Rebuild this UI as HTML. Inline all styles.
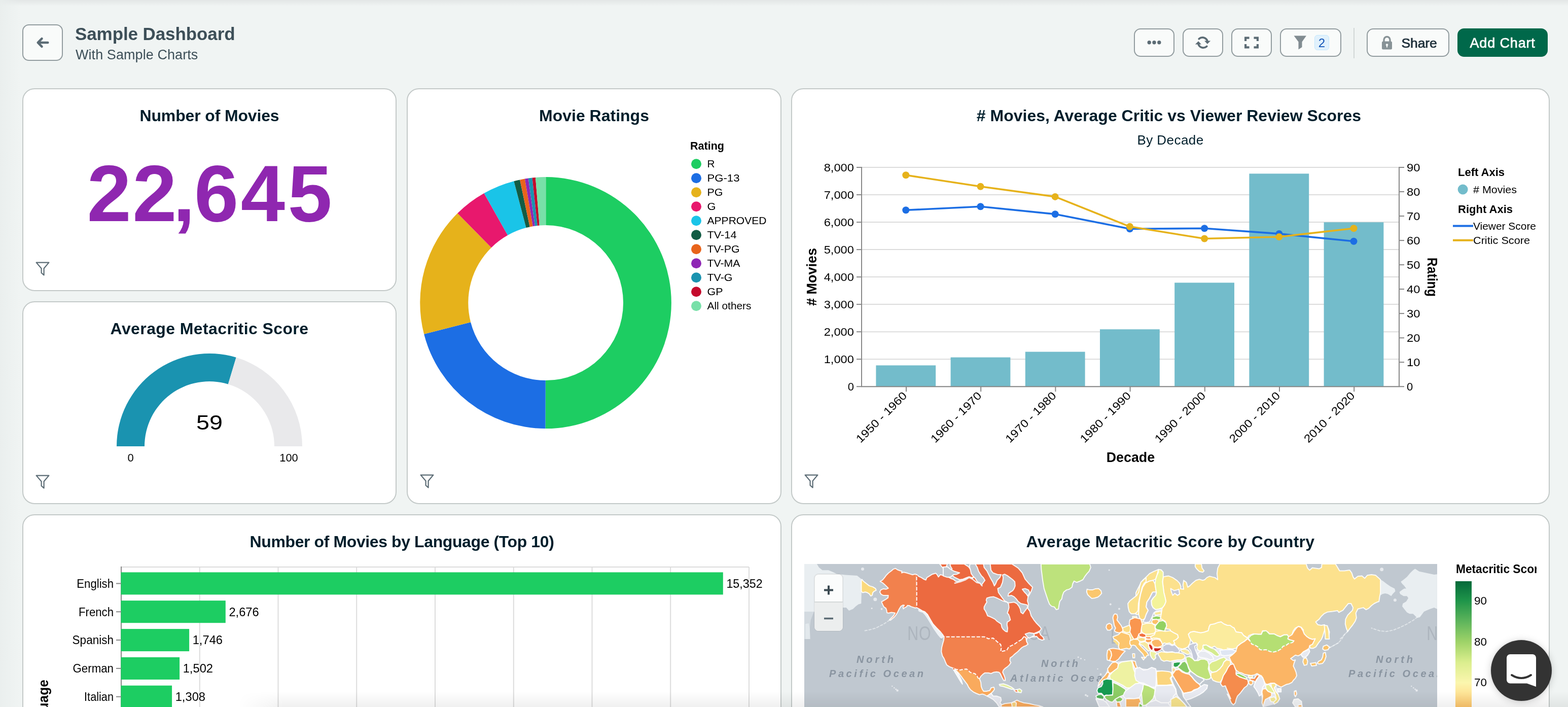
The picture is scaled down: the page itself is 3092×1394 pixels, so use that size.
<!DOCTYPE html>
<html lang="en">
<head>
<meta charset="utf-8">
<title>Sample Dashboard</title>
<style>
html,body{margin:0;padding:0}
body{width:3092px;height:1394px;overflow:hidden;background:#f0f4f3;font-family:"Liberation Sans",sans-serif;position:relative;color:#001e2b}
main,header{will-change:transform}
svg text{font-family:"Liberation Sans",sans-serif}
.shade-top{position:absolute;left:0;top:0;width:3092px;height:12px;background:linear-gradient(#e3e6e6,rgba(240,244,243,0))}
.shade-bottom{position:absolute;left:470px;top:1364px;width:2622px;height:30px;background:linear-gradient(rgba(0,0,0,0),rgba(0,0,0,.06));-webkit-mask-image:linear-gradient(90deg,transparent,#000 90px);mask-image:linear-gradient(90deg,transparent,#000 90px);pointer-events:none}
.shade-left{position:absolute;left:0;top:0;width:40px;height:1394px;background:linear-gradient(90deg,rgba(233,238,237,.85),rgba(240,244,243,0))}
.btn{position:absolute;box-sizing:border-box;top:56px;height:56px;border:2px solid #929c9f;border-radius:13px;background:#f9fbfa;box-shadow:0 0 0 0 transparent}
.btn svg{position:absolute}
.btn span{position:absolute;white-space:nowrap;line-height:1}
#back{left:44px;top:48px;width:80px;height:72px;border-radius:13px}
h1{position:absolute;margin:0;left:148px;top:47px;font-size:35px;line-height:40px;font-weight:700;color:#3d4f58;white-space:nowrap;letter-spacing:-0.1px}
.sub{position:absolute;margin:0;left:149px;top:92px;letter-spacing:0.07px;font-size:27px;line-height:32px;color:#3d4f58;white-space:nowrap}
.card{position:absolute;box-sizing:border-box;background:#fff;border:2px solid #c3c9c8;border-radius:24px;overflow:hidden}
.card h2{position:absolute;margin:0;left:0;right:0;text-align:center;font-size:32px;line-height:36px;font-weight:700;color:#001e2b;white-space:nowrap}
.card h2 span{display:inline-block}
.card .st{position:absolute;margin:0;left:0;right:0;text-align:center;font-size:26px;line-height:30px;color:#001e2b;white-space:nowrap}
.card > svg.ch{position:absolute;left:-2px;top:-2px}
.fi{position:absolute;left:24px}
.big{position:absolute;left:0;right:0;text-align:center;font-weight:700;color:#8f27b0;white-space:nowrap}
</style>
</head>
<body>
<div class="shade-top"></div><div class="shade-left"></div>
<header>
<a class="btn" id="back" aria-label="Back"><svg viewBox="0 0 32 32" width="32" height="32" style="left:22px;top:18px"><path d="M14.500 8.200L6.700 16l7.800 7.800M7.200 16H26.300" fill="none" stroke="#5c6c75" stroke-width="4.500" stroke-linecap="round" stroke-linejoin="round"/></svg></a>
<h1>Sample Dashboard</h1>
<p class="sub">With Sample Charts</p>
<nav>
<a class="btn" style="left:2236px;width:80px" aria-label="More"><svg viewBox="0 0 32 32" width="32" height="32" style="left:22px;top:10px"><circle cx="6.2" cy="15.8" r="3.7" fill="#5c6c75"/><circle cx="16" cy="15.8" r="3.7" fill="#5c6c75"/><circle cx="25.8" cy="15.8" r="3.7" fill="#5c6c75"/></svg></a>
<a class="btn" style="left:2332px;width:80px" aria-label="Refresh"><svg viewBox="0 0 32 32" width="32" height="32" style="left:22px;top:10px"><g fill="none" stroke="#5c6c75" stroke-width="3.8" stroke-linecap="round"><path d="M8.300 8.600A10.200 10.200 0 0 1 24.600 12"/><path d="M23.700 23.400A10.200 10.200 0 0 1 7.400 20"/></g><path d="M19 12.500H31.100L24.900 18.700Z" fill="#5c6c75"/><path d="M13 19.500H0.900L7.100 13.300Z" fill="#5c6c75"/></svg></a>
<a class="btn" style="left:2428px;width:80px" aria-label="Fullscreen"><svg viewBox="0 0 28 24" width="28" height="24" style="left:24px;top:14px"><path d="M2.100 9V2.600H9.500M18.500 2.600H25.900V9M25.900 15V21.400H18.500M9.500 21.400H2.100V15" fill="none" stroke="#5c6c75" stroke-width="4.200"/></svg></a>
<a class="btn" style="left:2524px;width:121px" aria-label="Filters"><svg viewBox="0 0 28 28" width="28" height="28" style="left:24px;top:12px"><path d="M1.500 0.500H26L17.500 12.500V23L10.500 27.500V12.500Z" fill="#818c91"/></svg><span style="left:66px;top:11px;width:29px;height:30px;box-sizing:border-box;border:1px solid #c3e7fe;border-radius:6px;background:#e1f1fc;color:#1254b7;font-size:24px;line-height:29px;text-align:center">2</span></a>
<i style="position:absolute;left:2669px;top:55px;width:2px;height:60px;background:#d2d7d6"></i>
<a class="btn" style="left:2695px;width:163px"><svg viewBox="0 0 22 28" width="22" height="29" style="left:27px;top:12px"><path d="M5 12V8a6 6 0 0 1 12 0v4" fill="none" stroke="#889397" stroke-width="3.4"/><rect x="1" y="11" width="20" height="16" rx="2.5" fill="#889397"/><circle cx="11" cy="18" r="2.2" fill="#f9fbfa"/><rect x="10" y="18" width="2" height="5" fill="#f9fbfa"/></svg><span style="left:66.5px;top:11px;font-size:26.5px;line-height:32px;font-weight:400;color:#1c2d38;-webkit-text-stroke:0.7px #1c2d38;letter-spacing:-0.1px">Share</span></a>
<a class="btn" style="left:2874px;width:178px;background:#00684a;border-color:#00684a"><span style="left:22.5px;top:11px;font-size:27px;line-height:32px;font-weight:400;color:#fff;-webkit-text-stroke:0.7px #fff;letter-spacing:0.85px">Add Chart</span></a>
</nav>
</header>
<main>
<section class="card" style="left:44px;top:174px;width:738px;height:400px"><h2 style="top:34px"><span style="letter-spacing:-0.15px">Number of Movies</span></h2><svg class="ch" width="738" height="400" viewBox="44 174 738 400"><text x="171.5" y="436.2" dx="0 2 -8 -2 4 5" font-size="157" font-weight="700" letter-spacing="0.4" fill="#8f27b0">22,645</text></svg><svg class="fi" style="top:340px" viewBox="0 0 28 28" width="28" height="28"><path d="M1.6 1.6H26.4L16.6 13.2V26.4L11.6 22V13.2Z" fill="none" stroke="#5c6c75" stroke-width="2.2" stroke-linejoin="round"/></svg></section>
<section class="card" style="left:44px;top:594px;width:738px;height:400px"><h2 style="top:34px"><span style="letter-spacing:0.4px">Average Metacritic Score</span></h2><svg class="ch" width="738" height="400" viewBox="44 594 738 400"><path d="M230.00,880.00A183,183 0 0 1 465.71,704.76L449.87,757.42A128,128 0 0 0 285.00,880.00Z" fill="#1a93b0"/><path d="M465.71,704.76A183,183 0 0 1 596.00,880.00L541.00,880.00A128,128 0 0 0 449.87,757.42Z" fill="#e9e9eb"/><text x="413.0" y="846.8" font-size="41" text-anchor="middle" textLength="52.0" lengthAdjust="spacingAndGlyphs" fill="#000">59</text><text x="257.5" y="909.5" font-size="22" text-anchor="middle" fill="#000">0</text><text x="569.5" y="909.5" font-size="22" text-anchor="middle" textLength="36.5" lengthAdjust="spacingAndGlyphs" fill="#000">100</text></svg><svg class="fi" style="top:340px" viewBox="0 0 28 28" width="28" height="28"><path d="M1.6 1.6H26.4L16.6 13.2V26.4L11.6 22V13.2Z" fill="none" stroke="#5c6c75" stroke-width="2.2" stroke-linejoin="round"/></svg></section>
<section class="card" style="left:802px;top:174px;width:739px;height:820px"><h2 style="top:34px"><span>Movie Ratings</span></h2><svg class="ch" width="739" height="820" viewBox="802 174 739 820"><path d="M1076.30,349.10A248,248 0 1 1 1075.43,845.10L1075.77,750.10A153,153 0 1 0 1076.30,444.10Z" fill="#1dcd62"/><path d="M1075.43,845.10A248,248 0 0 1 836.09,658.78L928.11,635.15A153,153 0 0 0 1075.77,750.10Z" fill="#1c6ee4"/><path d="M836.09,658.78A248,248 0 0 1 902.17,420.52L968.87,488.16A153,153 0 0 0 928.11,635.15Z" fill="#e6b21b"/><path d="M902.17,420.52A248,248 0 0 1 954.56,381.04L1001.19,463.80A153,153 0 0 0 968.87,488.16Z" fill="#e8186d"/><path d="M954.56,381.04A248,248 0 0 1 1013.37,357.22L1037.48,449.11A153,153 0 0 0 1001.19,463.80Z" fill="#1ac4e8"/><path d="M1013.37,357.22A248,248 0 0 1 1025.16,354.43L1044.75,447.39A153,153 0 0 0 1037.48,449.11Z" fill="#125c44"/><path d="M1025.16,354.43A248,248 0 0 1 1034.94,352.57L1050.78,446.24A153,153 0 0 0 1044.75,447.39Z" fill="#e8641b"/><path d="M1034.94,352.57A248,248 0 0 1 1041.79,351.51L1055.01,445.59A153,153 0 0 0 1050.78,446.24Z" fill="#8f27b5"/><path d="M1041.79,351.51A248,248 0 0 1 1049.52,350.55L1059.78,444.99A153,153 0 0 0 1055.01,445.59Z" fill="#1a93b0"/><path d="M1049.52,350.55A248,248 0 0 1 1055.98,349.93L1063.76,444.61A153,153 0 0 0 1059.78,444.99Z" fill="#c40a2c"/><path d="M1055.98,349.93A248,248 0 0 1 1076.30,349.10L1076.30,444.10A153,153 0 0 0 1063.76,444.61Z" fill="#78e0a8"/><text x="1361.0" y="294.7" font-size="22" font-weight="700" textLength="67.0" lengthAdjust="spacingAndGlyphs" fill="#000">Rating</text><circle cx="1373" cy="323.2" r="10" fill="#1dcd62"/><text x="1394.5" y="330.4" font-size="20.5" textLength="15.0" lengthAdjust="spacingAndGlyphs" fill="#000">R</text><circle cx="1373" cy="351.2" r="10" fill="#1c6ee4"/><text x="1394.5" y="358.4" font-size="20.5" textLength="64.0" lengthAdjust="spacingAndGlyphs" fill="#000">PG-13</text><circle cx="1373" cy="379.2" r="10" fill="#e6b21b"/><text x="1394.5" y="386.4" font-size="20.5" textLength="31.0" lengthAdjust="spacingAndGlyphs" fill="#000">PG</text><circle cx="1373" cy="407.2" r="10" fill="#e8186d"/><text x="1394.5" y="414.4" font-size="20.5" textLength="17.0" lengthAdjust="spacingAndGlyphs" fill="#000">G</text><circle cx="1373" cy="435.2" r="10" fill="#1ac4e8"/><text x="1394.5" y="442.4" font-size="20.5" textLength="117.0" lengthAdjust="spacingAndGlyphs" fill="#000">APPROVED</text><circle cx="1373" cy="463.2" r="10" fill="#125c44"/><text x="1394.5" y="470.4" font-size="20.5" textLength="58.0" lengthAdjust="spacingAndGlyphs" fill="#000">TV-14</text><circle cx="1373" cy="491.2" r="10" fill="#e8641b"/><text x="1394.5" y="498.4" font-size="20.5" textLength="64.0" lengthAdjust="spacingAndGlyphs" fill="#000">TV-PG</text><circle cx="1373" cy="519.2" r="10" fill="#8f27b5"/><text x="1394.5" y="526.4" font-size="20.5" textLength="65.0" lengthAdjust="spacingAndGlyphs" fill="#000">TV-MA</text><circle cx="1373" cy="547.2" r="10" fill="#1a93b0"/><text x="1394.5" y="554.4" font-size="20.5" textLength="50.0" lengthAdjust="spacingAndGlyphs" fill="#000">TV-G</text><circle cx="1373" cy="575.2" r="10" fill="#c40a2c"/><text x="1394.5" y="582.4" font-size="20.5" textLength="31.0" lengthAdjust="spacingAndGlyphs" fill="#000">GP</text><circle cx="1373" cy="603.2" r="10" fill="#78e0a8"/><text x="1394.5" y="610.4" font-size="20.5" textLength="87.0" lengthAdjust="spacingAndGlyphs" fill="#000">All others</text></svg><svg class="fi" style="top:759px" viewBox="0 0 28 28" width="28" height="28"><path d="M1.6 1.6H26.4L16.6 13.2V26.4L11.6 22V13.2Z" fill="none" stroke="#5c6c75" stroke-width="2.2" stroke-linejoin="round"/></svg></section>
<section class="card" style="left:1560px;top:174px;width:1496px;height:820px"><h2 style="top:34px;left:-6px"><span>&#35; Movies, Average Critic vs Viewer Review Scores</span></h2><p class="st" style="top:85px"><span style="letter-spacing:0.45px">By Decade</span></p><svg class="ch" width="1496" height="820" viewBox="1560 174 1496 820"><line x1="1699" x2="2759" y1="762.2" y2="762.2" stroke="#dcdcdc" stroke-width="2"/><line x1="1699" x2="2759" y1="708.2" y2="708.2" stroke="#dcdcdc" stroke-width="2"/><line x1="1699" x2="2759" y1="654.2" y2="654.2" stroke="#dcdcdc" stroke-width="2"/><line x1="1699" x2="2759" y1="600.1" y2="600.1" stroke="#dcdcdc" stroke-width="2"/><line x1="1699" x2="2759" y1="546.1" y2="546.1" stroke="#dcdcdc" stroke-width="2"/><line x1="1699" x2="2759" y1="492.1" y2="492.1" stroke="#dcdcdc" stroke-width="2"/><line x1="1699" x2="2759" y1="438.1" y2="438.1" stroke="#dcdcdc" stroke-width="2"/><line x1="1699" x2="2759" y1="384.0" y2="384.0" stroke="#dcdcdc" stroke-width="2"/><line x1="1699" x2="2759" y1="330.0" y2="330.0" stroke="#dcdcdc" stroke-width="2"/><rect x="1727.4" y="720.4" width="117.8" height="41.8" fill="#73bccb"/><rect x="1874.6" y="704.6" width="117.8" height="57.6" fill="#73bccb"/><rect x="2021.8" y="693.6" width="117.8" height="68.6" fill="#73bccb"/><rect x="2169.0" y="649.3" width="117.8" height="112.9" fill="#73bccb"/><rect x="2316.2" y="557.4" width="117.8" height="204.8" fill="#73bccb"/><rect x="2463.4" y="342.4" width="117.8" height="419.8" fill="#73bccb"/><rect x="2610.6" y="438.3" width="117.8" height="323.9" fill="#73bccb"/><path d="M1699,329V762.2H2759V329" fill="none" stroke="#888" stroke-width="2"/><line x1="1689" x2="1699" y1="762.2" y2="762.2" stroke="#888" stroke-width="2"/><text x="1684.0" y="770.2" font-size="22" text-anchor="end" fill="#000">0</text><line x1="1689" x2="1699" y1="708.2" y2="708.2" stroke="#888" stroke-width="2"/><text x="1684.0" y="716.2" font-size="22" text-anchor="end" textLength="59.3" lengthAdjust="spacingAndGlyphs" fill="#000">1,000</text><line x1="1689" x2="1699" y1="654.2" y2="654.2" stroke="#888" stroke-width="2"/><text x="1684.0" y="662.2" font-size="22" text-anchor="end" textLength="59.3" lengthAdjust="spacingAndGlyphs" fill="#000">2,000</text><line x1="1689" x2="1699" y1="600.1" y2="600.1" stroke="#888" stroke-width="2"/><text x="1684.0" y="608.1" font-size="22" text-anchor="end" textLength="59.3" lengthAdjust="spacingAndGlyphs" fill="#000">3,000</text><line x1="1689" x2="1699" y1="546.1" y2="546.1" stroke="#888" stroke-width="2"/><text x="1684.0" y="554.1" font-size="22" text-anchor="end" textLength="59.3" lengthAdjust="spacingAndGlyphs" fill="#000">4,000</text><line x1="1689" x2="1699" y1="492.1" y2="492.1" stroke="#888" stroke-width="2"/><text x="1684.0" y="500.1" font-size="22" text-anchor="end" textLength="59.3" lengthAdjust="spacingAndGlyphs" fill="#000">5,000</text><line x1="1689" x2="1699" y1="438.1" y2="438.1" stroke="#888" stroke-width="2"/><text x="1684.0" y="446.1" font-size="22" text-anchor="end" textLength="59.3" lengthAdjust="spacingAndGlyphs" fill="#000">6,000</text><line x1="1689" x2="1699" y1="384.0" y2="384.0" stroke="#888" stroke-width="2"/><text x="1684.0" y="392.0" font-size="22" text-anchor="end" textLength="59.3" lengthAdjust="spacingAndGlyphs" fill="#000">7,000</text><line x1="1689" x2="1699" y1="330.0" y2="330.0" stroke="#888" stroke-width="2"/><text x="1684.0" y="338.0" font-size="22" text-anchor="end" textLength="59.3" lengthAdjust="spacingAndGlyphs" fill="#000">8,000</text><line x1="2759" x2="2769" y1="762.2" y2="762.2" stroke="#888" stroke-width="2"/><text x="2774.0" y="770.2" font-size="22" fill="#000">0</text><line x1="2759" x2="2769" y1="714.2" y2="714.2" stroke="#888" stroke-width="2"/><text x="2774.0" y="722.2" font-size="22" textLength="26.5" lengthAdjust="spacingAndGlyphs" fill="#000">10</text><line x1="2759" x2="2769" y1="666.2" y2="666.2" stroke="#888" stroke-width="2"/><text x="2774.0" y="674.2" font-size="22" textLength="26.5" lengthAdjust="spacingAndGlyphs" fill="#000">20</text><line x1="2759" x2="2769" y1="618.1" y2="618.1" stroke="#888" stroke-width="2"/><text x="2774.0" y="626.1" font-size="22" textLength="26.5" lengthAdjust="spacingAndGlyphs" fill="#000">30</text><line x1="2759" x2="2769" y1="570.1" y2="570.1" stroke="#888" stroke-width="2"/><text x="2774.0" y="578.1" font-size="22" textLength="26.5" lengthAdjust="spacingAndGlyphs" fill="#000">40</text><line x1="2759" x2="2769" y1="522.1" y2="522.1" stroke="#888" stroke-width="2"/><text x="2774.0" y="530.1" font-size="22" textLength="26.5" lengthAdjust="spacingAndGlyphs" fill="#000">50</text><line x1="2759" x2="2769" y1="474.1" y2="474.1" stroke="#888" stroke-width="2"/><text x="2774.0" y="482.1" font-size="22" textLength="26.5" lengthAdjust="spacingAndGlyphs" fill="#000">60</text><line x1="2759" x2="2769" y1="426.1" y2="426.1" stroke="#888" stroke-width="2"/><text x="2774.0" y="434.1" font-size="22" textLength="26.5" lengthAdjust="spacingAndGlyphs" fill="#000">70</text><line x1="2759" x2="2769" y1="378.0" y2="378.0" stroke="#888" stroke-width="2"/><text x="2774.0" y="386.0" font-size="22" textLength="26.5" lengthAdjust="spacingAndGlyphs" fill="#000">80</text><line x1="2759" x2="2769" y1="330.0" y2="330.0" stroke="#888" stroke-width="2"/><text x="2774.0" y="338.0" font-size="22" textLength="26.5" lengthAdjust="spacingAndGlyphs" fill="#000">90</text><line x1="1787.0" x2="1787.0" y1="762.2" y2="772.2" stroke="#888" stroke-width="2"/><text transform="translate(1784.8,776.7) rotate(-45)" text-anchor="end" font-size="22" textLength="131" lengthAdjust="spacingAndGlyphs" y="7" fill="#000">1950 - 1960</text><line x1="1934.2" x2="1934.2" y1="762.2" y2="772.2" stroke="#888" stroke-width="2"/><text transform="translate(1932.0,776.7) rotate(-45)" text-anchor="end" font-size="22" textLength="131" lengthAdjust="spacingAndGlyphs" y="7" fill="#000">1960 - 1970</text><line x1="2081.4" x2="2081.4" y1="762.2" y2="772.2" stroke="#888" stroke-width="2"/><text transform="translate(2079.2,776.7) rotate(-45)" text-anchor="end" font-size="22" textLength="131" lengthAdjust="spacingAndGlyphs" y="7" fill="#000">1970 - 1980</text><line x1="2228.6" x2="2228.6" y1="762.2" y2="772.2" stroke="#888" stroke-width="2"/><text transform="translate(2226.4,776.7) rotate(-45)" text-anchor="end" font-size="22" textLength="131" lengthAdjust="spacingAndGlyphs" y="7" fill="#000">1980 - 1990</text><line x1="2375.8" x2="2375.8" y1="762.2" y2="772.2" stroke="#888" stroke-width="2"/><text transform="translate(2373.6,776.7) rotate(-45)" text-anchor="end" font-size="22" textLength="131" lengthAdjust="spacingAndGlyphs" y="7" fill="#000">1990 - 2000</text><line x1="2523.0" x2="2523.0" y1="762.2" y2="772.2" stroke="#888" stroke-width="2"/><text transform="translate(2520.8,776.7) rotate(-45)" text-anchor="end" font-size="22" textLength="131" lengthAdjust="spacingAndGlyphs" y="7" fill="#000">2000 - 2010</text><line x1="2670.2" x2="2670.2" y1="762.2" y2="772.2" stroke="#888" stroke-width="2"/><text transform="translate(2668.0,776.7) rotate(-45)" text-anchor="end" font-size="22" textLength="131" lengthAdjust="spacingAndGlyphs" y="7" fill="#000">2010 - 2020</text><polyline points="1786.3,414.3 1933.5,407.3 2080.7,422.2 2227.9,451.2 2375.1,450.3 2522.3,460.9 2669.5,475.8" fill="none" stroke="#1c6ee4" stroke-width="3.6" stroke-linejoin="round"/><circle cx="1786.3" cy="414.3" r="7" fill="#1c6ee4"/><circle cx="1933.5" cy="407.3" r="7" fill="#1c6ee4"/><circle cx="2080.7" cy="422.2" r="7" fill="#1c6ee4"/><circle cx="2227.9" cy="451.2" r="7" fill="#1c6ee4"/><circle cx="2375.1" cy="450.3" r="7" fill="#1c6ee4"/><circle cx="2522.3" cy="460.9" r="7" fill="#1c6ee4"/><circle cx="2669.5" cy="475.8" r="7" fill="#1c6ee4"/><polyline points="1786.3,345.3 1933.5,367.7 2080.7,387.9 2227.9,446.8 2375.1,470.5 2522.3,467.0 2669.5,450.3" fill="none" stroke="#e6b21b" stroke-width="3.6" stroke-linejoin="round"/><circle cx="1786.3" cy="345.3" r="7" fill="#e6b21b"/><circle cx="1933.5" cy="367.7" r="7" fill="#e6b21b"/><circle cx="2080.7" cy="387.9" r="7" fill="#e6b21b"/><circle cx="2227.9" cy="446.8" r="7" fill="#e6b21b"/><circle cx="2375.1" cy="470.5" r="7" fill="#e6b21b"/><circle cx="2522.3" cy="467.0" r="7" fill="#e6b21b"/><circle cx="2669.5" cy="450.3" r="7" fill="#e6b21b"/><text transform="translate(1610.3,546) rotate(-90)" text-anchor="middle" font-size="27" font-weight="700" textLength="114" lengthAdjust="spacingAndGlyphs">&#35; Movies</text><text transform="translate(2815.1,546.3) rotate(90)" text-anchor="middle" font-size="27" font-weight="700" textLength="77" lengthAdjust="spacingAndGlyphs">Rating</text><text x="2229.4" y="911.0" font-size="27" font-weight="700" text-anchor="middle" textLength="95.5" lengthAdjust="spacingAndGlyphs" fill="#000">Decade</text><text x="2875.0" y="347.0" font-size="22" font-weight="700" textLength="92.0" lengthAdjust="spacingAndGlyphs" fill="#000">Left Axis</text><circle cx="2884.6" cy="373.5" r="10" fill="#73bccb"/><text x="2905.0" y="381.0" font-size="20" textLength="86.0" lengthAdjust="spacingAndGlyphs" fill="#000"># Movies</text><text x="2875.0" y="419.5" font-size="22" font-weight="700" textLength="108.0" lengthAdjust="spacingAndGlyphs" fill="#000">Right Axis</text><line x1="2865" x2="2905" y1="445.6" y2="445.6" stroke="#1c6ee4" stroke-width="4"/><text x="2905.0" y="452.6" font-size="20" textLength="124.0" lengthAdjust="spacingAndGlyphs" fill="#000">Viewer Score</text><line x1="2865" x2="2905" y1="473.7" y2="473.7" stroke="#e6b21b" stroke-width="4"/><text x="2905.0" y="480.7" font-size="20" textLength="112.0" lengthAdjust="spacingAndGlyphs" fill="#000">Critic Score</text></svg><svg class="fi" style="top:759px" viewBox="0 0 28 28" width="28" height="28"><path d="M1.6 1.6H26.4L16.6 13.2V26.4L11.6 22V13.2Z" fill="none" stroke="#5c6c75" stroke-width="2.2" stroke-linejoin="round"/></svg></section>
<section class="card" style="left:44px;top:1014px;width:1497px;height:820px"><h2 style="top:34px"><span style="letter-spacing:-0.4px">Number of Movies by Language (Top 10)</span></h2><svg class="ch" width="1497" height="400" viewBox="44 1014 1497 400"><line x1="239.0" x2="239.0" y1="1118" y2="1400" stroke="#dcdcdc" stroke-width="2"/><line x1="393.8" x2="393.8" y1="1118" y2="1400" stroke="#dcdcdc" stroke-width="2"/><line x1="548.5" x2="548.5" y1="1118" y2="1400" stroke="#dcdcdc" stroke-width="2"/><line x1="703.2" x2="703.2" y1="1118" y2="1400" stroke="#dcdcdc" stroke-width="2"/><line x1="858.0" x2="858.0" y1="1118" y2="1400" stroke="#dcdcdc" stroke-width="2"/><line x1="1012.8" x2="1012.8" y1="1118" y2="1400" stroke="#dcdcdc" stroke-width="2"/><line x1="1167.5" x2="1167.5" y1="1118" y2="1400" stroke="#dcdcdc" stroke-width="2"/><line x1="1322.2" x2="1322.2" y1="1118" y2="1400" stroke="#dcdcdc" stroke-width="2"/><line x1="1477.0" x2="1477.0" y1="1118" y2="1400" stroke="#dcdcdc" stroke-width="2"/><line x1="239" x2="1477.0" y1="1118" y2="1118" stroke="#dcdcdc" stroke-width="2"/><line x1="239" x2="239" y1="1117" y2="1400" stroke="#888" stroke-width="2"/><rect x="238.4" y="1128.4" width="1187.4" height="44" fill="#1dcd62"/><line x1="229" x2="239" y1="1150.4" y2="1150.4" stroke="#888" stroke-width="2"/><text x="224.0" y="1158.7" font-size="23.5" text-anchor="end" textLength="72.7" lengthAdjust="spacingAndGlyphs" fill="#000">English</text><text x="1432.4" y="1158.7" font-size="23" textLength="71.2" lengthAdjust="spacingAndGlyphs" fill="#000">15,352</text><rect x="238.4" y="1184.2" width="206.4" height="44" fill="#1dcd62"/><line x1="229" x2="239" y1="1206.2" y2="1206.2" stroke="#888" stroke-width="2"/><text x="224.0" y="1214.5" font-size="23.5" text-anchor="end" textLength="69.0" lengthAdjust="spacingAndGlyphs" fill="#000">French</text><text x="451.4" y="1214.5" font-size="23" textLength="59.3" lengthAdjust="spacingAndGlyphs" fill="#000">2,676</text><rect x="238.4" y="1240.1" width="134.7" height="44" fill="#1dcd62"/><line x1="229" x2="239" y1="1262.1" y2="1262.1" stroke="#888" stroke-width="2"/><text x="224.0" y="1270.4" font-size="23.5" text-anchor="end" textLength="81.4" lengthAdjust="spacingAndGlyphs" fill="#000">Spanish</text><text x="379.7" y="1270.4" font-size="23" textLength="59.3" lengthAdjust="spacingAndGlyphs" fill="#000">1,746</text><rect x="238.4" y="1295.9" width="115.7" height="44" fill="#1dcd62"/><line x1="229" x2="239" y1="1317.9" y2="1317.9" stroke="#888" stroke-width="2"/><text x="224.0" y="1326.2" font-size="23.5" text-anchor="end" textLength="80.5" lengthAdjust="spacingAndGlyphs" fill="#000">German</text><text x="360.7" y="1326.2" font-size="23" textLength="59.3" lengthAdjust="spacingAndGlyphs" fill="#000">1,502</text><rect x="238.4" y="1351.7" width="100.7" height="44" fill="#1dcd62"/><line x1="229" x2="239" y1="1373.7" y2="1373.7" stroke="#888" stroke-width="2"/><text x="224.0" y="1382.0" font-size="23.5" text-anchor="end" textLength="57.9" lengthAdjust="spacingAndGlyphs" fill="#000">Italian</text><text x="345.7" y="1382.0" font-size="23" textLength="59.3" lengthAdjust="spacingAndGlyphs" fill="#000">1,308</text><rect x="238.4" y="1407.6" width="71.6" height="44" fill="#1dcd62"/><line x1="229" x2="239" y1="1429.6" y2="1429.6" stroke="#888" stroke-width="2"/><text x="224.0" y="1437.9" font-size="23.5" text-anchor="end" textLength="90.0" lengthAdjust="spacingAndGlyphs" fill="#000">Japanese</text><text x="316.6" y="1437.9" font-size="23" textLength="40.0" lengthAdjust="spacingAndGlyphs" fill="#000">900</text><text transform="translate(94.9,1402.2) rotate(-90)" text-anchor="middle" font-size="27" font-weight="700" textLength="124" lengthAdjust="spacingAndGlyphs">Language</text></svg></section>
<section class="card" style="left:1560px;top:1014px;width:1496px;height:820px"><h2 style="top:34px"><span style="letter-spacing:0.28px">Average Metacritic Score by Country</span></h2><svg class="ch" width="1496" height="400" viewBox="1560 1014 1496 400"><defs><linearGradient id="lg" x1="0" y1="0" x2="0" y2="1"><stop offset="0" stop-color="#05693a"/><stop offset="0.095" stop-color="#1e9449"/><stop offset="0.2" stop-color="#5fb55c"/><stop offset="0.3" stop-color="#9fd368"/><stop offset="0.4" stop-color="#dbee8e"/><stop offset="0.5" stop-color="#fbf6ae"/><stop offset="0.56" stop-color="#fee192"/><stop offset="0.62" stop-color="#fdc56c"/><stop offset="0.7" stop-color="#fdae61"/><stop offset="0.8" stop-color="#f46d43"/><stop offset="0.9" stop-color="#d73027"/><stop offset="1" stop-color="#a50026"/></linearGradient><clipPath id="mc"><rect x="1586" y="1112" width="1248" height="300"/></clipPath><clipPath id="lc"><rect x="2860" y="1100" width="170" height="40"/></clipPath></defs><rect x="1586" y="1112" width="1248" height="300" fill="#c0c8d0"/><g clip-path="url(#mc)"><path d="M1586.0,1112.1L1610.9,1112.1L1614.9,1118.8L1621.7,1124.2L1633.8,1124.2L1643.2,1128.2L1649.9,1131.6L1666.0,1133.6L1690.2,1134.9L1698.3,1141.6L1698.9,1167.2L1698.3,1190.0L1692.9,1191.4L1687.5,1195.4L1682.1,1200.8L1674.1,1204.1L1668.7,1198.1L1662.0,1198.1L1662.0,1206.1L1605.5,1206.1L1586.0,1206.1Z" fill="#e9eef1"/><path d="M1586.0,1206.1L1605.5,1206.1L1602.8,1211.5L1598.8,1222.3L1596.8,1238.4L1597.5,1260.0L1586.0,1260.0Z" fill="#d3dae0"/><path d="M1588.1,1230.3L1594.8,1229.0L1596.8,1238.4L1597.5,1260.0L1588.1,1260.0Z" fill="#e2e8ec"/><path d="M2722.7,1143.0L2727.4,1145.7L2734.1,1151.0L2742.1,1156.4L2750.2,1160.4L2751.5,1165.8L2746.2,1171.2L2743.5,1175.2L2736.8,1171.2L2731.4,1169.9L2726.0,1171.2L2722.2,1173.9Z" fill="#e9eef1"/><path d="M2790.5,1121.5L2798.6,1126.8L2809.3,1128.9L2818.7,1130.9L2828.1,1132.9L2833.9,1132.2L2833.9,1200.8L2828.1,1198.1L2820.1,1200.8L2813.4,1203.4L2808.0,1206.1L2804.0,1211.5L2799.9,1216.9L2794.5,1218.2L2790.5,1214.2L2786.5,1210.2L2779.8,1210.2L2774.4,1207.5L2769.0,1200.8L2765.0,1195.4L2766.3,1190.0L2773.0,1186.0L2777.1,1179.3L2774.4,1175.2L2767.7,1175.2L2761.0,1171.2L2759.6,1167.2L2765.0,1163.1L2769.0,1160.4L2773.0,1160.4L2769.0,1155.1L2765.0,1151.0L2762.3,1147.0L2767.7,1143.0L2774.4,1137.6L2781.1,1129.5L2786.5,1124.2Z" fill="#e9eef1"/><text x="1725.5" y="1307.2" font-size="20" textLength="73" lengthAdjust="spacing" font-style="italic" font-weight="700" fill="#828d9a" fill-opacity=".88" text-anchor="middle">North</text><text x="1728" y="1335.4" font-size="20" textLength="186" lengthAdjust="spacing" font-style="italic" font-weight="700" fill="#828d9a" fill-opacity=".88" text-anchor="middle">Pacific Ocean</text><text x="2749.5" y="1307.2" font-size="20" textLength="73" lengthAdjust="spacing" font-style="italic" font-weight="700" fill="#828d9a" fill-opacity=".88" text-anchor="middle">North</text><text x="2752" y="1335.4" font-size="20" textLength="186" lengthAdjust="spacing" font-style="italic" font-weight="700" fill="#828d9a" fill-opacity=".88" text-anchor="middle">Pacific Ocean</text><text x="2089.5" y="1315.3" font-size="20" textLength="73" lengthAdjust="spacing" font-style="italic" font-weight="700" fill="#828d9a" fill-opacity=".88" text-anchor="middle">North</text><text x="2091" y="1343.5" font-size="20" textLength="198" lengthAdjust="spacing" font-style="italic" font-weight="700" fill="#828d9a" fill-opacity=".88" text-anchor="middle">Atlantic Ocean</text><g transform="translate(1788.5,1261.5) scale(0.8,1)"><text x="0" y="0" dx="0.8 1.26 20.44 1.41 1.41 1.41 1.41 1.41 1.41 1.41 1.41 1.41 1.41" font-size="38" fill="#adb5be">NORTH AMERICA</text></g><g transform="translate(2812.5,1261.5) scale(0.8,1)"><text x="0" y="0" dx="0.8 1.26 20.44 1.41 1.41 1.41 1.41 1.41 1.41 1.41 1.41 1.41 1.41" font-size="38" fill="#adb5be">NORTH AMERICA</text></g><g transform="translate(2190,1269) scale(0.76,1)"><text x="0" y="0" font-size="38" textLength="197.4" lengthAdjust="spacing" fill="#adb5be">EUROPE</text></g><polyline points="1753.8,1222.9 1747.0,1227.6 1740.3,1231.7 1733.6,1235.0 1726.9,1238.4 1720.2,1240.4 1713.4,1242.0 1704.0,1243.8" fill="none" stroke="#f4f6f8" stroke-opacity="0.6" stroke-width="2" stroke-linecap="round" stroke-linejoin="round" stroke-dasharray="4.5 3.5999999999999996"/><polyline points="1814.2,1202.8 1821.0,1204.8 1826.3,1210.2 1831.0,1216.9 1835.1,1223.6 1839.1,1230.3 1843.1,1237.0 1847.2,1243.1 1851.9,1249.8 1856.6,1255.2" fill="none" stroke="#f4f6f8" stroke-opacity="0.9" stroke-width="7" stroke-linecap="round" stroke-linejoin="round"/><polyline points="2801.3,1211.5 2787.8,1222.3 2774.4,1230.3 2761.0,1237.0 2747.5,1242.4 2734.1,1245.1 2720.6,1243.8 2704.5,1238.4" fill="none" stroke="#f4f6f8" stroke-opacity="0.6" stroke-width="2" stroke-linecap="round" stroke-linejoin="round" stroke-dasharray="4.5 3.5999999999999996"/><polyline points="2657.5,1245.1 2649.4,1253.2 2642.7,1260.0" fill="none" stroke="#f4f6f8" stroke-opacity="0.6" stroke-width="2" stroke-linecap="round" stroke-linejoin="round" stroke-dasharray="4.5 3.5999999999999996"/><polyline points="2620.0,1278.3 2638.8,1267.6 2645.5,1260.8 2650.9,1251.4 2660.3,1242.0" fill="none" stroke="#f4f6f8" stroke-opacity="0.6" stroke-width="2" stroke-linecap="round" stroke-linejoin="round" stroke-dasharray="4.5 3.5999999999999996"/><polyline points="2621.6,1277.0 2629.6,1272.9 2639.1,1267.6" fill="none" stroke="#f4f6f8" stroke-opacity="0.6" stroke-width="2" stroke-linecap="round" stroke-linejoin="round" stroke-dasharray="4.5 3.5999999999999996"/><circle cx="2783.3" cy="1352.9" r="1.2" fill="#f4f6f8" fill-opacity=".75"/><circle cx="2787.3" cy="1356.3" r="1.3" fill="#f4f6f8" fill-opacity=".75"/><circle cx="2790.7" cy="1359.0" r="1.5" fill="#f4f6f8" fill-opacity=".75"/><circle cx="2793.6" cy="1361.4" r="2.2" fill="#f4f6f8" fill-opacity=".75"/><circle cx="1759.3" cy="1352.9" r="1.2" fill="#f4f6f8" fill-opacity=".75"/><circle cx="1763.3" cy="1356.3" r="1.3" fill="#f4f6f8" fill-opacity=".75"/><circle cx="1766.7" cy="1359.0" r="1.5" fill="#f4f6f8" fill-opacity=".75"/><circle cx="1769.6" cy="1361.4" r="2.2" fill="#f4f6f8" fill-opacity=".75"/><circle cx="1701.0" cy="1122.1" r="3" fill="#f4f6f8" fill-opacity=".75"/><circle cx="1725.8" cy="1181.7" r="3.5" fill="#f4f6f8" fill-opacity=".75"/><circle cx="1719.1" cy="1199.4" r="1.5" fill="#f4f6f8" fill-opacity=".75"/><circle cx="1738.6" cy="1200.8" r="2" fill="#f4f6f8" fill-opacity=".75"/><circle cx="2724.7" cy="1122.8" r="3.5" fill="#f4f6f8" fill-opacity=".75"/><circle cx="2750.9" cy="1183.3" r="3" fill="#f4f6f8" fill-opacity=".75"/><circle cx="2126.2" cy="1295.8" r="1.5" fill="#f4f6f8" fill-opacity=".75"/><circle cx="2131.5" cy="1298.5" r="1.5" fill="#f4f6f8" fill-opacity=".75"/><circle cx="2138.9" cy="1300.9" r="1.2" fill="#f4f6f8" fill-opacity=".75"/><circle cx="2164.5" cy="1318.9" r="1.2" fill="#f4f6f8" fill-opacity=".75"/><circle cx="2170.5" cy="1329.4" r="2" fill="#f4f6f8" fill-opacity=".75"/><circle cx="2141.0" cy="1370.4" r="2" fill="#f4f6f8" fill-opacity=".75"/><circle cx="2144.3" cy="1372.4" r="1.8" fill="#f4f6f8" fill-opacity=".75"/><circle cx="2187.2" cy="1123.9" r="1.5" fill="#f4f6f8" fill-opacity=".75"/><circle cx="2189.8" cy="1191.4" r="2" fill="#f4f6f8" fill-opacity=".75"/><circle cx="2207.0" cy="1200.5" r="2" fill="#f4f6f8" fill-opacity=".75"/><path d="M2203.7,1253.9L2212.5,1243.9L2227.5,1240.1L2230.0,1221.4L2249.9,1218.9L2254.9,1228.9L2277.4,1223.9L2289.9,1208.9L2299.9,1221.4L2299.9,1243.9L2329.9,1243.9L2344.9,1248.9L2344.9,1273.9L2329.9,1278.9L2319.9,1266.4L2294.9,1263.9L2289.9,1278.9L2274.9,1283.9L2266.2,1276.4L2254.9,1266.4L2242.5,1263.9L2230.0,1263.9L2230.0,1278.9L2210.0,1278.9L2195.0,1263.9Z" fill="#fbe08b"/><path d="M2309.9,1301.4L2339.9,1296.4L2359.9,1278.9L2404.8,1278.9L2429.8,1291.4L2427.3,1311.3L2414.8,1323.8L2389.8,1328.8L2387.3,1338.8L2369.9,1333.8L2354.9,1323.8L2342.4,1318.8L2319.9,1321.3L2309.9,1318.8Z" fill="#e8eaf1"/><path d="M2180.0,1328.8L2187.5,1311.3L2205.0,1303.9L2232.5,1301.4L2240.0,1316.3L2279.9,1321.3L2307.4,1323.8L2317.4,1353.8L2332.4,1378.8L2339.9,1394.0L2180.0,1394.0Z" fill="#e8eaf1"/><path d="M2473.8,1330.7L2495.3,1348.2L2506.0,1346.9L2516.8,1349.5L2523.5,1377.8L2512.7,1388.5L2492.6,1394.0L2487.2,1372.4L2473.8,1353.6Z" fill="#e8eaf1"/><g stroke="#fff" stroke-width="2" stroke-linejoin="round" stroke-opacity=".9"><path d="M1765.9,1120.8L1769.9,1123.5L1775.3,1125.5L1778.6,1126.2L1777.9,1129.5L1782.0,1128.2L1787.4,1129.5L1794.1,1131.6L1799.4,1133.3L1804.2,1132.0L1807.5,1132.9L1807.8,1165.8L1807.8,1198.1L1804.8,1198.7L1800.8,1197.4L1796.8,1196.1L1792.7,1194.0L1789.4,1193.8L1787.4,1196.7L1784.0,1198.1L1781.3,1200.5L1780.6,1196.7L1783.3,1193.4L1780.6,1193.0L1776.6,1195.4L1773.2,1200.8L1769.9,1207.5L1766.5,1212.9L1763.2,1216.9L1759.1,1220.2L1755.8,1222.9L1753.8,1222.3L1757.8,1218.2L1761.8,1214.2L1765.2,1208.8L1763.2,1208.2L1757.8,1207.5L1752.4,1208.8L1749.1,1208.2L1748.4,1203.4L1747.0,1199.4L1743.0,1196.7L1740.3,1191.4L1738.3,1186.7L1741.7,1184.6L1746.4,1181.9L1751.1,1178.6L1751.7,1173.9L1747.0,1173.9L1741.7,1173.9L1737.6,1171.9L1734.9,1167.2L1737.0,1163.1L1741.7,1161.1L1747.0,1161.8L1751.7,1159.8L1748.4,1156.4L1744.3,1152.4L1740.3,1149.0L1735.6,1146.3L1740.3,1143.6L1744.3,1138.9L1747.7,1134.2L1752.4,1129.5L1757.8,1125.5L1761.8,1122.1Z" fill="#f2814d"/><path d="M1699.6,1142.3L1702.3,1145.7L1709.0,1151.0L1714.4,1155.1L1721.1,1157.1L1726.5,1160.4L1727.8,1163.8L1723.8,1165.8L1721.1,1168.5L1719.8,1173.9L1717.1,1175.2L1714.4,1171.2L1710.4,1168.5L1706.3,1167.2L1701.0,1168.5L1698.5,1165.8L1698.5,1144.3Z" fill="#fbd97c"/><path d="M1807.5,1132.9L1811.5,1136.3L1816.9,1138.9L1822.3,1142.3L1825.7,1143.6L1827.7,1138.9L1833.0,1135.6L1838.4,1132.2L1845.1,1130.2L1847.8,1132.9L1850.5,1137.6L1854.5,1132.9L1859.9,1134.9L1865.3,1133.6L1870.7,1138.3L1876.1,1141.0L1880.1,1142.3L1884.1,1145.7L1888.1,1147.0L1894.9,1144.3L1898.9,1143.0L1905.6,1140.3L1911.0,1138.3L1917.7,1140.3L1919.9,1137.6L1919.9,1112.1L1995.7,1112.1L2007.8,1120.1L2015.9,1129.5L2021.3,1141.6L2029.3,1151.0L2036.1,1157.8L2034.0,1164.5L2030.7,1171.2L2027.3,1176.6L2026.0,1184.6L2028.0,1191.4L2026.6,1199.4L2030.7,1204.8L2033.4,1214.2L2038.7,1222.3L2044.1,1229.0L2050.8,1235.7L2053.5,1239.7L2050.8,1243.8L2045.5,1246.5L2038.7,1249.1L2033.4,1251.8L2028.0,1253.2L2028.1,1251.4L2036.1,1250.1L2044.2,1248.8L2049.6,1246.1L2051.6,1251.4L2056.3,1255.5L2059.0,1260.8L2054.9,1262.2L2048.2,1259.5L2044.2,1254.8L2036.1,1255.5L2028.1,1256.8L2025.4,1258.2L2022.7,1267.6L2020.0,1268.9L2027.0,1270.3L2024.3,1264.9L2022.9,1256.8L2018.9,1255.5L2014.9,1260.8L2008.1,1264.9L2000.1,1270.3L1989.3,1275.6L1985.3,1282.3L1973.2,1285.0L1974.5,1277.0L1973.2,1270.9L1966.5,1265.6L1958.4,1258.2L1949.0,1259.5L1941.0,1255.7L1861.7,1255.7L1859.0,1251.4L1853.6,1244.7L1846.9,1238.0L1839.8,1230.3L1834.4,1220.9L1829.0,1211.5L1823.6,1206.1L1818.3,1204.1L1812.9,1200.8L1807.8,1198.1L1807.8,1165.8Z" fill="#ec6a40"/><path d="M1853.2,1112.1L1868.0,1112.1L1865.3,1118.8L1861.9,1122.8L1857.2,1117.4Z" fill="#ec6a40"/><path d="M1873.4,1112.1L1901.6,1112.1L1909.6,1117.4L1915.0,1124.2L1919.1,1130.9L1920.0,1136.3L1917.7,1139.2L1911.0,1137.3L1905.6,1139.2L1898.9,1141.9L1892.2,1143.0L1886.8,1140.3L1881.4,1137.6L1877.4,1134.2L1880.1,1129.5L1876.1,1125.5L1877.4,1121.5L1874.7,1117.4Z" fill="#ec6a40"/><path d="M1860.0,1118.1L1868.1,1117.4L1874.8,1122.8L1882.8,1126.8L1892.3,1129.5L1886.9,1132.2L1880.2,1132.9L1874.8,1137.6L1868.1,1138.3L1860.0,1135.6Z" fill="#c0c8d0"/><path d="M1912.7,1112.1L1923.2,1112.1L1927.2,1118.8L1929.9,1126.8L1935.3,1135.2L1939.3,1139.2L1942.2,1144.3L1938.6,1149.0L1935.3,1154.0L1932.6,1149.7L1927.2,1147.0L1923.2,1140.3L1919.1,1136.5L1915.1,1130.9L1913.8,1124.2L1911.7,1117.4Z" fill="#c0c8d0"/><path d="M1939.3,1112.1L1952.7,1112.1L1954.1,1124.2L1958.1,1129.5L1967.5,1132.9L1974.2,1132.9L1971.5,1138.9L1966.2,1144.3L1963.5,1151.0L1960.8,1155.1L1958.1,1148.3L1954.1,1141.6L1950.0,1133.6L1946.0,1125.5L1940.6,1118.8Z" fill="#c0c8d0"/><path d="M1946.0,1179.3L1952.7,1177.2L1959.4,1176.6L1966.2,1179.3L1971.5,1181.9L1976.9,1184.6L1981.0,1186.0L1986.3,1187.3L1989.0,1191.4L1989.7,1198.1L1988.3,1203.4L1986.3,1208.8L1989.0,1211.5L1991.0,1216.9L1992.4,1222.3L1989.0,1225.0L1986.3,1226.3L1985.7,1231.7L1987.0,1238.4L1986.3,1245.8L1983.0,1245.1L1978.3,1241.1L1975.6,1237.0L1974.2,1230.3L1970.2,1227.6L1966.2,1225.0L1962.1,1220.9L1956.8,1218.2L1951.4,1215.5L1947.4,1214.2L1945.3,1208.8L1943.3,1204.8L1940.6,1200.8L1940.6,1196.7L1943.3,1191.4L1946.0,1187.3L1944.7,1183.3Z" fill="#c0c8d0"/><path d="M1967.5,1160.4L1972.9,1157.8L1976.9,1148.3L1978.3,1138.9L1976.9,1133.6L1981.0,1132.2L1986.3,1134.9L1991.7,1138.9L1997.1,1143.0L2001.1,1147.0L2001.8,1155.1L1999.8,1160.4L1997.1,1164.5L1993.0,1167.2L1989.0,1169.9L1987.7,1175.2L1994.4,1173.9L1999.8,1176.6L2003.8,1180.6L2007.8,1186.0L2013.2,1190.0L2019.9,1191.4L2025.3,1192.7L2026.6,1196.7L2024.0,1200.8L2019.9,1206.1L2017.2,1210.2L2013.2,1207.5L2011.9,1200.8L2009.2,1195.4L2005.1,1190.0L1999.8,1187.3L1994.4,1188.0L1989.0,1188.7L1986.3,1187.3L1981.0,1184.6L1976.9,1179.3L1972.9,1173.9L1968.9,1168.5Z" fill="#c0c8d0"/><path d="M2015.9,1161.8L2021.3,1160.4L2028.0,1163.1L2030.7,1168.5L2026.6,1175.2L2024.0,1171.2L2019.9,1167.2Z" fill="#c0c8d0"/><path d="M2021.6,1250.1L2029.6,1247.4L2037.7,1248.8L2040.0,1252.8L2035.0,1255.5L2029.6,1258.2L2025.6,1255.5Z" fill="#c0c8d0"/><path d="M1861.7,1255.7L1941.0,1255.7L1949.0,1259.5L1958.4,1258.2L1966.5,1265.6L1973.2,1270.9L1974.5,1277.0L1973.2,1285.0L1985.3,1282.3L1989.3,1275.6L2000.1,1270.3L2008.1,1264.9L2014.9,1260.8L2018.9,1255.5L2022.9,1256.8L2024.3,1264.9L2027.0,1270.3L2022.9,1273.2L2018.9,1274.6L2014.9,1277.0L2010.8,1281.0L2006.8,1285.0L2000.1,1290.4L1996.1,1294.4L1992.0,1297.1L1991.3,1302.5L1993.4,1306.5L1990.7,1310.6L1986.6,1314.6L1982.6,1317.3L1978.6,1321.3L1977.2,1325.4L1979.7,1330.7L1981.7,1336.1L1982.3,1341.7L1979.3,1341.7L1975.6,1335.0L1972.5,1328.3L1969.8,1325.4L1965.1,1324.7L1959.8,1325.4L1954.4,1328.0L1949.0,1326.7L1942.3,1326.7L1938.3,1329.4L1934.2,1333.4L1931.5,1338.1L1928.9,1337.4L1926.2,1332.1L1922.1,1328.0L1916.8,1327.4L1912.7,1325.4L1908.7,1321.3L1906.0,1319.3L1899.3,1320.0L1892.6,1321.3L1885.9,1320.0L1879.1,1317.3L1872.4,1314.6L1867.0,1311.2L1864.3,1305.2L1861.7,1298.5L1858.3,1293.1L1856.3,1285.0L1857.0,1277.0L1859.0,1268.9L1861.0,1262.2Z" fill="#f2814d"/><path d="M1879.1,1318.6L1885.9,1320.0L1892.6,1321.3L1899.3,1320.0L1906.0,1319.3L1908.7,1321.3L1912.7,1325.4L1916.8,1327.4L1922.1,1328.0L1926.2,1332.1L1928.9,1337.4L1931.5,1338.1L1934.2,1345.5L1934.9,1353.6L1936.9,1359.0L1939.6,1363.0L1945.0,1363.0L1951.7,1361.6L1954.4,1356.3L1959.8,1354.9L1961.1,1359.0L1958.4,1363.0L1954.4,1367.0L1949.0,1371.0L1946.3,1372.4L1941.0,1369.7L1936.9,1368.4L1931.5,1369.7L1924.8,1367.0L1919.4,1364.3L1914.1,1360.3L1910.0,1354.9L1907.4,1349.5L1903.3,1344.2L1899.3,1338.8L1895.3,1333.4L1891.2,1328.0L1887.2,1324.0L1883.2,1321.3Z" fill="#f9aa5d"/><path d="M1879.1,1318.6L1883.2,1325.4L1887.2,1332.1L1891.2,1338.8L1895.3,1345.5L1897.9,1348.9L1895.9,1341.5L1891.9,1333.4L1887.9,1326.0L1884.5,1321.3Z" fill="#f1f3f5"/><path d="M1946.3,1372.4L1954.4,1367.0L1958.4,1372.4L1965.1,1372.4L1973.2,1375.1L1974.5,1380.5L1971.9,1385.8L1975.9,1389.9L1981.3,1394.0L1970.5,1394.0L1965.1,1385.8L1958.4,1379.1L1951.7,1375.1Z" fill="#e8eaf1"/><path d="M1970.5,1349.5L1978.6,1348.2L1986.6,1350.9L1994.7,1354.9L2000.1,1359.0L1994.7,1359.0L1986.6,1356.3L1978.6,1353.6L1971.9,1352.2Z" fill="#e4ee9e"/><path d="M2005.5,1359.6L2010.8,1358.3L2014.9,1361.6L2013.5,1365.7L2008.1,1365.0Z" fill="#dbe986"/><path d="M1999.4,1361.0L2005.5,1359.6L2008.1,1365.0L2002.8,1364.3Z" fill="#f2703f"/><path d="M1974.5,1389.9L1981.3,1387.2L1994.7,1385.8L2005.5,1380.5L2010.8,1383.1L2018.9,1385.8L2029.6,1387.2L2040.0,1389.9L2048.5,1391.2L2056.5,1394.0L1974.5,1394.0Z" fill="#f9aa5d"/><path d="M1994.7,1385.8L2000.1,1383.8L2004.1,1385.8L2003.4,1394.0L1996.1,1394.0Z" fill="#fbd57e"/><path d="M2052.8,1112.1L2148.9,1112.1L2150.9,1118.8L2147.5,1126.8L2143.5,1130.9L2139.4,1136.3L2135.4,1143.0L2130.0,1145.7L2123.3,1148.3L2117.9,1145.7L2115.3,1151.0L2113.9,1157.8L2108.5,1161.8L2103.2,1163.1L2097.8,1167.2L2095.1,1173.9L2093.8,1180.6L2089.7,1186.0L2088.4,1192.7L2087.0,1200.8L2083.0,1202.1L2079.0,1196.7L2073.6,1195.4L2069.6,1191.4L2066.9,1184.6L2064.2,1176.6L2061.5,1168.5L2058.8,1160.4L2057.5,1152.4L2056.1,1144.3L2054.8,1133.6L2053.4,1122.8Z" fill="#bde27c"/><path d="M2143.5,1161.8L2148.9,1163.1L2154.2,1163.1L2159.6,1161.1L2166.3,1160.4L2171.0,1164.5L2172.4,1169.9L2169.0,1173.9L2165.0,1177.2L2158.3,1179.3L2152.9,1179.9L2148.9,1176.6L2144.8,1172.5L2142.8,1167.2Z" fill="#fbc76e"/><path d="M2293.8,1137.6L2299.1,1136.3L2304.5,1135.6L2312.6,1138.9L2320.6,1144.3L2326.0,1149.7L2328.7,1156.4L2328.0,1161.1L2334.1,1161.8L2332.7,1153.7L2334.1,1144.3L2339.4,1148.3L2342.1,1157.8L2346.2,1155.1L2351.5,1149.7L2358.3,1144.3L2365.0,1142.3L2371.7,1144.3L2375.7,1143.0L2379.8,1138.9L2385.1,1136.3L2390.5,1137.6L2395.9,1138.9L2401.3,1143.0L2399.9,1130.9L2401.3,1120.1L2405.3,1112.1L2575.7,1112.1L2578.4,1120.1L2582.5,1124.2L2587.8,1119.5L2601.3,1121.5L2606.0,1118.8L2606.6,1112.1L2633.5,1112.1L2637.6,1118.8L2641.6,1125.5L2651.0,1125.5L2660.0,1124.2L2661.5,1124.2L2665.5,1129.5L2668.2,1137.6L2670.9,1141.6L2677.6,1136.3L2685.7,1135.6L2691.1,1140.3L2696.4,1134.2L2704.5,1132.9L2712.6,1134.2L2717.9,1138.9L2722.2,1143.0L2722.2,1168.5L2720.6,1176.6L2719.3,1186.0L2715.3,1187.3L2709.9,1190.0L2704.5,1194.0L2699.1,1199.4L2693.8,1202.1L2688.4,1198.1L2683.0,1199.4L2677.6,1200.8L2673.6,1208.8L2674.9,1218.2L2672.3,1225.0L2666.9,1233.0L2661.5,1239.7L2657.5,1245.1L2654.8,1238.4L2652.8,1230.3L2653.4,1220.9L2657.5,1212.9L2662.8,1207.5L2666.9,1203.4L2668.2,1198.1L2664.2,1190.0L2658.8,1190.0L2653.4,1196.7L2648.1,1203.4L2640.0,1207.5L2637.6,1204.1L2628.1,1205.5L2617.4,1206.8L2610.7,1210.2L2605.3,1215.5L2601.3,1220.9L2594.5,1226.3L2598.6,1231.7L2605.3,1233.0L2612.0,1231.7L2613.5,1238.0L2610.8,1246.1L2608.1,1255.5L2605.5,1260.8L2600.1,1267.6L2594.7,1275.6L2589.3,1278.3L2584.0,1278.3L2582.6,1272.9L2588.0,1270.3L2590.7,1264.9L2593.4,1259.5L2588.0,1260.8L2581.3,1258.2L2577.2,1255.5L2571.9,1250.1L2569.2,1243.4L2566.5,1238.7L2570.4,1242.4L2566.3,1237.0L2561.0,1235.0L2554.2,1238.4L2550.2,1243.8L2547.5,1251.8L2543.5,1257.2L2542.1,1255.9L2538.1,1251.8L2531.4,1251.8L2524.7,1255.2L2517.9,1253.2L2512.6,1249.8L2503.2,1249.8L2500.5,1246.5L2495.1,1243.8L2489.7,1243.8L2487.0,1250.5L2480.3,1250.5L2470.9,1249.8L2462.8,1253.2L2460.2,1257.2L2460.3,1258.2L2452.3,1252.8L2448.2,1247.4L2437.5,1246.1L2433.4,1238.0L2430.8,1237.0L2425.5,1233.0L2420.1,1233.0L2413.4,1230.3L2408.0,1226.3L2401.3,1227.6L2394.5,1230.3L2386.5,1231.7L2384.5,1235.7L2382.5,1243.8L2374.4,1246.5L2367.7,1247.8L2361.0,1246.5L2354.2,1245.1L2347.5,1246.5L2343.5,1250.5L2345.0,1255.5L2347.7,1260.8L2346.3,1268.9L2342.3,1275.6L2336.9,1278.3L2331.5,1279.7L2326.2,1278.3L2322.1,1277.0L2316.8,1271.6L2314.1,1263.5L2319.4,1260.8L2323.5,1256.8L2322.1,1251.4L2314.1,1247.4L2307.4,1243.4L2315.3,1250.5L2309.9,1246.5L2307.2,1241.1L2299.1,1239.7L2300.5,1233.0L2297.8,1225.0L2288.4,1219.6L2289.7,1211.5L2291.1,1203.4L2291.1,1200.8L2292.4,1198.1L2296.4,1192.7L2299.1,1186.0L2297.8,1179.3L2295.1,1168.5L2293.8,1157.8L2292.4,1147.0Z" fill="#fce18d"/><path d="M2356.9,1112.1L2369.0,1112.1L2370.4,1120.1L2374.4,1125.5L2371.7,1128.2L2365.0,1126.8L2359.6,1121.5L2356.9,1117.4Z" fill="#fce18d"/><path d="M2613.5,1238.0L2618.9,1238.0L2621.6,1246.1L2620.2,1255.5L2616.2,1256.8L2614.9,1248.8Z" fill="#fce18d"/><path d="M2611.3,1233.0L2617.4,1233.7L2620.1,1243.8L2621.4,1260.0L2613.4,1260.0L2612.7,1245.1Z" fill="#fce18d"/><path d="M2308.5,1160.4L2315.3,1164.5L2320.6,1163.1L2324.7,1161.8L2326.0,1171.2L2322.0,1173.9L2316.6,1169.9L2312.6,1173.9L2309.9,1167.2Z" fill="#c4c9d9"/><path d="M2343.5,1250.5L2347.5,1246.5L2354.2,1245.1L2361.0,1246.5L2367.7,1247.8L2374.4,1246.5L2382.5,1243.8L2384.5,1235.7L2386.5,1231.7L2394.5,1230.3L2401.3,1227.6L2408.0,1226.3L2413.4,1230.3L2420.1,1233.0L2425.5,1233.0L2430.8,1237.0L2433.4,1238.0L2437.5,1246.1L2448.2,1247.4L2452.3,1252.8L2460.3,1258.2L2453.6,1264.9L2446.9,1268.9L2440.2,1274.3L2437.5,1278.3L2428.1,1279.7L2420.0,1278.3L2432.3,1279.7L2421.6,1281.0L2413.5,1282.3L2408.1,1279.7L2400.1,1278.3L2394.7,1274.3L2389.3,1277.0L2381.3,1272.9L2373.2,1271.6L2371.9,1278.3L2367.8,1283.7L2362.7,1282.3L2360.0,1277.0L2361.4,1270.9L2358.7,1267.8L2353.0,1267.6L2347.7,1260.8L2345.0,1255.5Z" fill="#fbec9e"/><path d="M2461.7,1258.2L2467.0,1252.8L2473.8,1250.1L2481.8,1250.8L2487.2,1250.8L2489.9,1244.7L2496.6,1243.4L2500.6,1247.4L2503.3,1250.1L2512.7,1250.1L2519.4,1253.5L2524.8,1255.5L2531.5,1252.1L2538.3,1251.4L2541.0,1255.5L2539.6,1259.5L2543.6,1261.5L2551.7,1263.5L2549.0,1266.9L2541.0,1268.9L2535.6,1272.9L2530.2,1274.3L2526.2,1279.7L2519.4,1283.7L2511.4,1285.7L2503.3,1284.4L2496.6,1281.0L2489.9,1281.7L2484.5,1281.0L2480.5,1275.6L2473.8,1271.6L2468.4,1270.3L2465.7,1264.9Z" fill="#b5df73"/><path d="M2424.0,1295.8L2430.8,1290.4L2437.5,1282.3L2440.2,1274.3L2446.9,1268.9L2453.6,1264.9L2460.3,1259.5L2465.7,1264.9L2468.4,1270.3L2473.8,1271.6L2480.5,1275.6L2484.5,1281.0L2489.9,1281.7L2496.6,1281.0L2503.3,1284.4L2511.4,1285.7L2519.4,1283.7L2526.2,1279.7L2530.2,1274.3L2535.6,1272.9L2541.0,1268.9L2549.0,1266.9L2551.7,1263.5L2543.6,1261.5L2539.6,1259.5L2541.0,1255.5L2547.7,1251.4L2551.7,1244.7L2555.7,1239.3L2559.8,1235.3L2565.1,1236.7L2569.2,1243.4L2571.9,1250.1L2577.2,1255.5L2581.3,1258.2L2588.0,1260.8L2593.4,1259.5L2590.7,1264.9L2588.0,1270.3L2582.6,1272.9L2581.3,1278.3L2577.2,1281.0L2570.5,1285.0L2565.1,1290.4L2559.8,1293.1L2554.4,1291.8L2549.0,1295.8L2545.0,1298.5L2550.4,1302.5L2554.4,1301.2L2551.7,1307.9L2550.4,1313.3L2553.0,1318.6L2555.7,1325.4L2557.1,1332.1L2554.4,1337.4L2550.4,1341.5L2547.7,1345.5L2542.3,1348.2L2536.9,1349.5L2531.5,1352.2L2526.2,1354.9L2520.8,1352.2L2516.8,1349.5L2512.7,1346.9L2506.0,1346.9L2499.3,1349.5L2495.3,1348.2L2492.6,1342.8L2489.9,1336.1L2487.2,1332.1L2483.2,1330.7L2479.1,1328.0L2473.8,1330.7L2467.0,1332.1L2460.3,1330.7L2453.6,1329.4L2448.2,1326.7L2442.8,1325.4L2437.5,1321.3L2434.8,1315.9L2432.1,1310.6L2428.1,1305.2Z" fill="#fbb565"/><path d="M2565.1,1290.4L2570.5,1285.0L2577.2,1282.3L2581.3,1279.7L2582.6,1285.0L2578.6,1291.8L2574.5,1295.8L2569.2,1295.8Z" fill="#e8eaf1"/><path d="M2570.5,1298.5L2575.9,1297.1L2578.6,1303.9L2577.2,1310.6L2571.9,1311.9L2569.2,1305.2Z" fill="#fbc870"/><path d="M2609.5,1274.3L2616.2,1271.6L2621.6,1275.6L2618.9,1281.0L2612.2,1282.3L2608.1,1279.7Z" fill="#fbc268"/><path d="M2609.5,1287.7L2613.5,1286.4L2614.9,1294.4L2612.2,1302.5L2608.1,1307.9L2601.4,1309.2L2597.4,1307.9L2600.1,1303.9L2605.5,1301.2L2608.1,1295.8Z" fill="#fbc268"/><path d="M2584.0,1307.9L2594.7,1306.5L2596.1,1311.9L2586.6,1313.3Z" fill="#fbc268"/><path d="M2425.6,1310.6L2432.3,1309.2L2434.8,1315.9L2437.5,1322.7L2437.5,1329.4L2444.2,1334.8L2452.3,1337.4L2460.3,1340.1L2461.7,1346.9L2459.0,1352.2L2453.6,1356.3L2449.6,1361.6L2445.5,1367.0L2440.2,1372.4L2437.5,1379.1L2436.1,1385.8L2432.1,1389.9L2428.1,1385.8L2424.0,1376.4L2420.0,1368.4L2427.0,1377.8L2422.9,1368.4L2418.9,1359.0L2416.2,1352.2L2410.8,1353.6L2406.8,1348.2L2409.5,1340.1L2412.2,1332.1L2417.6,1324.0L2421.6,1315.9Z" fill="#f58c4d"/><path d="M2464.3,1337.4L2473.8,1337.4L2477.8,1330.7L2483.2,1330.7L2481.8,1334.8L2477.8,1340.1L2475.1,1345.5L2472.4,1342.8L2465.7,1341.5Z" fill="#f58c4d"/><path d="M2437.5,1326.7L2444.2,1328.0L2452.3,1332.1L2459.0,1336.1L2457.6,1338.8L2450.9,1336.8L2442.8,1333.4L2438.1,1330.7Z" fill="#8fd05f"/><path d="M2461.7,1332.1L2469.7,1332.1L2469.7,1336.1L2461.7,1336.1Z" fill="#f5e9a0"/><path d="M2461.7,1342.8L2468.4,1341.5L2471.1,1346.9L2467.0,1350.9L2463.0,1348.2Z" fill="#fbb565"/><path d="M2475.1,1345.5L2479.1,1338.8L2484.5,1332.1L2489.9,1336.1L2492.6,1342.8L2493.9,1349.5L2489.9,1354.9L2488.5,1361.6L2487.2,1369.7L2483.2,1372.4L2480.5,1365.7L2476.4,1359.0L2472.4,1353.6Z" fill="#e8eaf1"/><path d="M2489.9,1359.0L2495.3,1357.6L2500.6,1363.0L2507.4,1365.7L2507.4,1372.4L2500.6,1376.4L2495.3,1379.1L2492.6,1385.8L2491.2,1394.0L2488.5,1385.8L2489.9,1372.4L2488.5,1364.3Z" fill="#fbb565"/><path d="M2495.3,1350.9L2502.0,1349.5L2507.4,1354.9L2511.4,1361.6L2514.1,1367.0L2507.4,1365.7L2500.6,1363.0L2496.6,1357.6Z" fill="#e8ee9a"/><path d="M2506.0,1348.2L2512.7,1346.9L2516.8,1350.9L2512.7,1356.3L2515.4,1363.0L2520.8,1369.7L2523.5,1377.8L2519.4,1384.5L2512.7,1388.5L2511.4,1383.1L2516.8,1377.8L2514.1,1367.0L2511.4,1361.6L2507.4,1354.9Z" fill="#f6e48e"/><path d="M2503.3,1376.4L2512.7,1373.7L2516.8,1379.1L2511.4,1384.5L2506.0,1383.1Z" fill="#f3ea9a"/><path d="M2552.4,1363.0L2555.7,1361.6L2557.1,1368.4L2554.4,1373.7L2552.4,1369.7Z" fill="#fbb565"/><path d="M2519.4,1357.6L2526.2,1357.6L2526.2,1364.3L2520.1,1364.3Z" fill="#f1f3f5"/><path d="M2551.7,1379.1L2559.8,1377.8L2566.5,1383.1L2567.8,1394.0L2554.4,1394.0L2549.0,1385.8Z" fill="#f1f3f5"/><path d="M2559.8,1389.9L2566.5,1389.2L2567.8,1394.0L2559.8,1394.0Z" fill="#fbb565"/><path d="M2371.9,1272.9L2378.6,1271.6L2386.6,1277.0L2394.7,1279.7L2400.1,1285.0L2405.5,1291.8L2400.1,1294.4L2394.7,1291.8L2389.3,1287.7L2384.0,1285.0L2378.6,1282.3L2373.2,1279.7Z" fill="#d4eb8e"/><path d="M2361.1,1289.1L2367.8,1283.7L2375.9,1283.7L2384.0,1287.7L2390.7,1293.1L2393.4,1299.8L2386.6,1301.2L2379.9,1298.5L2371.9,1297.1L2365.1,1295.8Z" fill="#e8eaf1"/><path d="M2405.5,1282.3L2416.2,1281.0L2429.6,1281.0L2437.7,1283.7L2432.3,1289.1L2424.3,1291.8L2414.9,1293.1L2408.1,1291.8Z" fill="#dfe6f3"/><path d="M2338.3,1295.8L2345.0,1294.4L2351.7,1298.5L2355.7,1302.5L2362.5,1302.5L2367.8,1299.8L2375.9,1299.8L2381.3,1302.5L2384.0,1310.6L2382.6,1318.6L2385.3,1326.7L2388.0,1334.8L2385.3,1338.8L2378.6,1340.1L2371.9,1337.4L2365.1,1334.8L2359.8,1332.1L2354.4,1328.0L2349.0,1324.0L2345.0,1318.6L2342.3,1311.9L2339.6,1303.9Z" fill="#bfe27a"/><path d="M2322.1,1315.9L2327.5,1310.6L2331.5,1305.2L2336.9,1303.9L2341.0,1309.2L2343.6,1317.3L2346.3,1322.7L2343.6,1326.7L2338.3,1326.7L2332.9,1324.0L2327.5,1320.0Z" fill="#86c963"/><path d="M2314.1,1306.5L2322.1,1305.2L2328.9,1305.2L2326.2,1310.6L2322.1,1314.6L2316.8,1315.9L2313.4,1313.3Z" fill="#2aa24f"/><path d="M2311.4,1315.9L2316.8,1317.3L2319.4,1321.3L2315.4,1325.4L2311.4,1324.0Z" fill="#f5dca0"/><path d="M2318.1,1321.3L2324.8,1320.0L2331.5,1325.4L2338.3,1328.0L2345.0,1329.4L2350.4,1334.8L2354.4,1340.1L2359.8,1345.5L2365.1,1349.5L2367.8,1353.6L2362.5,1357.6L2354.4,1360.3L2349.0,1364.3L2341.0,1365.7L2334.2,1367.0L2330.2,1361.6L2326.2,1354.9L2322.1,1348.2L2318.1,1341.5L2314.1,1334.8L2311.4,1330.7Z" fill="#fba95e"/><path d="M2334.2,1367.0L2349.0,1364.3L2362.5,1357.6L2367.8,1353.6L2374.5,1349.5L2381.3,1350.9L2379.9,1357.6L2373.2,1364.3L2365.1,1369.7L2357.1,1373.7L2347.7,1377.8L2338.3,1380.5L2332.9,1373.7Z" fill="#e8eaf1"/><path d="M2384.0,1310.6L2389.3,1305.2L2397.4,1302.5L2405.5,1298.5L2413.5,1295.8L2418.9,1299.8L2413.5,1305.2L2410.8,1311.9L2405.5,1318.6L2398.7,1324.0L2390.7,1325.4L2385.3,1321.3Z" fill="#dcec8c"/><path d="M2388.0,1326.7L2398.7,1324.0L2405.5,1318.6L2410.8,1311.9L2413.5,1305.2L2418.9,1301.2L2425.6,1302.5L2427.0,1309.2L2421.6,1315.9L2417.6,1324.0L2412.2,1332.1L2409.5,1340.1L2405.5,1345.5L2398.7,1344.2L2392.0,1341.5L2388.0,1334.8Z" fill="#fbe08a"/><path d="M2283.2,1287.7L2289.9,1285.0L2300.6,1286.4L2311.4,1285.7L2322.1,1287.1L2332.9,1289.1L2336.9,1293.1L2335.6,1298.5L2330.2,1301.2L2322.1,1301.2L2314.1,1302.5L2307.4,1303.9L2300.6,1302.5L2295.3,1303.9L2289.9,1301.2L2287.2,1295.8L2284.5,1291.8Z" fill="#fbe48d"/><path d="M2327.5,1281.0L2336.9,1279.7L2343.6,1282.3L2347.7,1289.1L2341.0,1290.4L2335.6,1287.7L2330.2,1285.0Z" fill="#f8e9a0"/><path d="M2292.6,1274.3L2299.3,1270.3L2306.0,1270.3L2311.4,1272.9L2316.8,1271.6L2322.1,1277.0L2326.2,1282.3L2324.8,1286.4L2318.1,1287.1L2311.4,1285.0L2303.3,1285.7L2296.6,1285.0L2292.6,1281.0Z" fill="#c4c9d9"/><path d="M2345.0,1271.6L2351.7,1268.9L2358.4,1267.6L2361.1,1270.3L2355.7,1274.3L2357.1,1281.0L2359.8,1287.7L2362.5,1294.4L2361.1,1301.2L2355.7,1302.5L2351.7,1297.1L2350.4,1290.4L2347.7,1282.3L2343.6,1277.0Z" fill="#c4c9d9"/><path d="M2240.0,1168.5L2244.0,1160.4L2248.1,1152.4L2253.4,1144.3L2260.2,1137.6L2266.9,1130.9L2274.9,1126.8L2284.3,1122.8L2281.7,1133.6L2279.0,1141.6L2273.6,1144.3L2266.9,1145.7L2258.8,1149.7L2253.4,1157.8L2249.4,1171.2L2246.7,1184.6L2246.0,1198.1L2245.4,1211.5L2240.0,1211.5Z" fill="#fbe18c"/><path d="M2260.0,1138.9L2255.0,1143.0L2249.6,1148.3L2247.0,1157.8L2245.6,1167.2L2241.6,1173.9L2234.9,1179.3L2228.1,1184.6L2224.1,1190.0L2224.8,1198.1L2226.8,1206.1L2230.8,1210.2L2237.6,1210.2L2241.6,1207.5L2244.3,1203.4L2244.9,1190.0L2247.0,1179.3L2249.6,1168.5L2252.3,1157.8L2256.4,1149.7L2260.0,1147.0Z" fill="#fbe18c"/><path d="M2266.9,1145.7L2273.6,1144.3L2277.6,1151.0L2279.0,1160.4L2280.3,1167.2L2272.3,1168.5L2266.9,1179.3L2261.5,1187.3L2260.2,1196.7L2264.2,1203.4L2260.2,1211.5L2257.5,1219.6L2253.4,1222.3L2248.1,1220.9L2245.4,1211.5L2246.0,1198.1L2246.7,1184.6L2249.4,1171.2L2253.4,1157.8L2258.8,1149.7Z" fill="#fbd980"/><path d="M2284.3,1122.8L2289.7,1123.5L2293.8,1128.2L2293.8,1137.6L2292.4,1147.0L2293.8,1157.8L2295.1,1168.5L2297.8,1179.3L2299.1,1186.0L2296.4,1192.7L2292.4,1198.1L2285.7,1200.8L2279.0,1202.1L2273.6,1198.1L2270.9,1192.7L2270.2,1184.6L2273.6,1179.3L2277.6,1173.9L2280.3,1168.5L2279.0,1160.4L2277.6,1151.0L2279.0,1141.6L2281.7,1133.6L2284.3,1128.2Z" fill="#f4f39a"/><path d="M2273.6,1167.2L2280.3,1167.2L2279.0,1173.9L2273.6,1179.3L2270.2,1184.6L2270.9,1192.7L2273.6,1198.1L2279.0,1202.1L2291.1,1200.8L2291.1,1203.4L2280.3,1204.8L2274.9,1208.8L2272.3,1215.5L2269.6,1220.9L2266.9,1226.3L2260.2,1227.6L2253.4,1226.3L2257.5,1219.6L2260.2,1211.5L2264.2,1203.4L2260.2,1196.7L2261.5,1187.3L2266.9,1179.3L2272.3,1168.5Z" fill="#c4c9d9"/><path d="M2276.3,1207.5L2289.7,1204.8L2289.7,1211.5L2277.6,1212.9Z" fill="#fbe794"/><path d="M2272.3,1216.9L2280.3,1214.2L2288.4,1215.5L2288.4,1220.9L2280.3,1222.3L2272.3,1220.9Z" fill="#8fd05f"/><path d="M2272.3,1222.3L2280.3,1220.9L2285.7,1223.6L2284.3,1229.0L2279.0,1231.7L2273.6,1230.3L2270.9,1226.3Z" fill="#fcc068"/><path d="M2279.0,1233.0L2285.7,1225.0L2293.8,1223.6L2299.1,1227.6L2300.5,1234.4L2297.8,1239.7L2296.4,1245.1L2287.0,1242.4L2280.3,1241.1L2277.6,1237.0Z" fill="#93d162"/><path d="M2250.8,1231.7L2260.2,1229.0L2270.9,1229.0L2277.6,1233.0L2277.6,1238.4L2279.0,1245.1L2274.9,1249.1L2266.9,1250.5L2257.5,1250.5L2252.1,1246.5L2249.4,1238.4Z" fill="#fbe794"/><path d="M2233.5,1215.5L2241.6,1215.5L2241.6,1227.6L2234.2,1227.6Z" fill="#fbdc85"/><path d="M2198.6,1210.2L2202.6,1211.5L2204.0,1216.9L2202.6,1222.3L2206.6,1227.6L2210.7,1233.0L2213.4,1238.4L2214.7,1242.4L2212.0,1246.5L2206.6,1247.8L2201.3,1246.5L2197.2,1243.8L2199.9,1238.4L2197.2,1233.0L2195.9,1225.0L2194.5,1218.2L2195.9,1212.9Z" fill="#fcab5e"/><path d="M2182.5,1231.7L2187.8,1229.0L2191.9,1231.7L2193.2,1238.4L2189.2,1242.4L2183.8,1242.4L2181.1,1237.0Z" fill="#fcb263"/><path d="M2213.5,1238.0L2227.0,1232.6L2229.6,1238.0L2229.6,1246.1L2221.6,1247.4L2214.9,1244.7Z" fill="#fbdc85"/><path d="M2229.4,1238.0L2226.7,1229.9L2228.1,1221.9L2237.5,1217.8L2249.6,1220.5L2252.3,1229.9L2250.9,1238.0L2249.6,1247.4L2245.5,1251.4L2242.8,1258.2L2236.1,1260.8L2232.1,1254.1L2228.1,1246.1Z" fill="#f9964f"/><path d="M2245.5,1250.1L2252.3,1248.1L2259.0,1250.8L2260.3,1255.5L2253.6,1256.8L2246.9,1254.8Z" fill="#f2703f"/><path d="M2259.0,1255.5L2268.4,1255.5L2271.1,1259.5L2264.3,1260.2L2259.0,1258.8Z" fill="#f98d4a"/><path d="M2259.0,1260.8L2265.7,1260.2L2272.4,1260.8L2269.7,1266.2L2263.0,1267.6L2258.3,1264.9Z" fill="#fba85c"/><path d="M2242.8,1258.2L2250.9,1256.8L2258.3,1258.2L2258.3,1263.5L2250.9,1264.9L2244.2,1263.5Z" fill="#fbdc85"/><path d="M2276.4,1251.4L2279.1,1244.7L2289.9,1243.4L2297.9,1244.7L2307.4,1243.4L2314.1,1247.4L2322.1,1251.4L2323.5,1256.8L2319.4,1260.8L2314.1,1263.5L2316.8,1268.9L2311.4,1271.6L2306.0,1267.6L2300.6,1268.9L2295.3,1267.6L2292.6,1271.6L2289.9,1264.9L2287.2,1259.5L2280.5,1258.2L2273.8,1258.2L2271.1,1259.5L2268.4,1255.5Z" fill="#fbe48d"/><path d="M2271.1,1263.5L2276.4,1260.8L2284.5,1260.2L2289.9,1264.9L2292.6,1271.6L2289.9,1274.3L2283.2,1276.3L2276.4,1275.6L2272.4,1271.6L2270.4,1266.9Z" fill="#fbb766"/><path d="M2265.0,1270.3L2268.4,1269.6L2272.4,1273.6L2273.8,1278.3L2272.4,1283.0L2269.1,1281.0L2266.4,1277.0L2265.0,1272.9Z" fill="#d73027"/><path d="M2275.1,1277.0L2283.2,1277.6L2289.9,1277.0L2290.6,1279.7L2287.2,1282.3L2283.2,1284.4L2277.8,1285.0L2275.1,1282.3Z" fill="#c9281f"/><path d="M2246.9,1267.6L2257.6,1264.9L2264.3,1268.9L2265.7,1277.0L2268.4,1282.3L2264.3,1283.7L2259.0,1278.3L2253.6,1272.9L2248.2,1270.3Z" fill="#f6e9a0"/><path d="M2269.7,1283.7L2277.8,1285.7L2281.8,1289.1L2277.8,1291.8L2279.1,1297.1L2275.1,1301.2L2271.1,1297.1L2268.4,1291.8L2267.7,1286.4Z" fill="#eef2a2"/><path d="M2194.7,1255.5L2205.5,1251.4L2210.8,1246.1L2218.9,1248.8L2227.0,1251.4L2229.6,1259.5L2228.3,1268.9L2231.0,1275.6L2227.0,1279.7L2221.6,1278.3L2214.9,1279.7L2208.1,1281.0L2205.5,1275.6L2206.8,1267.6L2201.4,1262.2L2196.1,1259.5Z" fill="#fcc56d"/><path d="M2228.1,1263.5L2236.1,1260.2L2244.2,1261.1L2247.6,1265.6L2246.2,1270.3L2251.2,1275.6L2256.6,1281.0L2261.9,1286.4L2265.0,1291.8L2261.0,1293.1L2259.0,1297.1L2256.0,1294.4L2253.3,1289.1L2248.0,1283.7L2242.6,1278.3L2238.8,1273.2L2234.8,1271.9L2230.8,1273.2L2227.8,1269.2Z" fill="#fcc76e"/><path d="M2250.9,1295.8L2257.6,1297.1L2254.9,1301.2Z" fill="#fcc76e"/><path d="M2233.4,1289.1L2237.5,1289.1L2237.5,1297.1L2234.1,1297.1Z" fill="#fcc76e"/><path d="M2186.6,1279.7L2194.7,1278.3L2205.5,1279.7L2213.5,1282.3L2218.9,1283.7L2213.5,1289.1L2209.5,1294.4L2205.5,1299.8L2200.1,1303.9L2193.4,1303.9L2188.0,1302.5L2192.0,1291.8L2190.7,1285.0Z" fill="#fba75b"/><path d="M2184.0,1282.3L2187.3,1280.3L2190.7,1285.0L2192.0,1291.8L2188.0,1302.5L2183.3,1301.2L2182.6,1291.8Z" fill="#fbb461"/><path d="M2193.4,1306.5L2200.1,1305.2L2205.5,1309.2L2204.1,1317.3L2198.7,1321.3L2193.4,1325.4L2188.0,1328.0L2185.3,1324.0L2184.0,1318.6L2188.0,1313.3Z" fill="#fbb565"/><path d="M2185.3,1325.4L2188.0,1328.0L2185.3,1334.8L2181.3,1340.1L2175.9,1341.5L2171.9,1344.2L2167.8,1350.9L2165.1,1353.6L2167.8,1344.2L2173.2,1337.4L2178.6,1332.1L2182.6,1326.7Z" fill="#fbb565"/><path d="M2205.5,1309.2L2212.2,1305.2L2221.6,1303.9L2231.0,1302.5L2233.7,1309.2L2235.0,1318.6L2237.7,1325.4L2240.0,1332.1L2241.7,1341.5L2248.5,1345.5L2240.4,1349.5L2235.0,1353.6L2228.3,1356.3L2221.6,1356.3L2213.5,1350.9L2205.5,1346.9L2197.4,1342.8L2189.3,1338.8L2188.0,1332.1L2193.4,1325.4L2198.7,1321.3L2204.1,1317.3Z" fill="#eef2a2"/><path d="M2232.1,1302.5L2238.8,1303.9L2240.2,1310.6L2242.8,1315.9L2238.8,1318.6L2236.1,1313.3Z" fill="#fbb565"/><path d="M2174.5,1341.5L2181.3,1338.8L2193.4,1340.1L2194.0,1349.5L2194.7,1359.0L2194.0,1369.7L2186.6,1371.0L2181.3,1370.4L2177.2,1372.4L2171.9,1367.0L2165.1,1367.0L2163.1,1361.6L2165.1,1356.3L2171.9,1353.6L2174.5,1348.2Z" fill="#169a51"/><path d="M2194.7,1345.5L2201.4,1348.2L2210.8,1353.6L2218.9,1359.0L2221.6,1364.3L2217.6,1369.7L2210.8,1372.4L2205.5,1375.1L2198.7,1379.1L2193.4,1384.5L2188.0,1383.1L2181.3,1379.1L2177.2,1373.7L2181.3,1371.0L2194.0,1370.4L2194.7,1359.0Z" fill="#8dcd66"/><path d="M2161.1,1372.4L2166.5,1369.7L2171.9,1369.0L2177.2,1373.7L2175.9,1379.1L2167.8,1377.8L2162.5,1376.4Z" fill="#54b25b"/><path d="M2161.1,1377.8L2175.9,1380.5L2181.3,1384.5L2188.0,1394.0L2167.8,1394.0Z" fill="#e8eaf1"/><path d="M2198.7,1379.1L2208.1,1373.7L2214.9,1377.8L2210.8,1383.1L2202.8,1384.5Z" fill="#8dcd66"/><path d="M2220.0,1361.6L2228.1,1356.3L2238.8,1348.2L2246.9,1346.9L2254.9,1349.5L2253.6,1357.6L2250.9,1367.0L2246.9,1375.1L2236.1,1377.8L2225.4,1376.4L2220.0,1377.8L2214.6,1372.4L2217.3,1365.7Z" fill="#e8eaf1"/><path d="M2201.4,1384.5L2208.1,1384.5L2210.8,1394.0L2202.8,1394.0Z" fill="#fba75b"/><path d="M2220.0,1377.8L2236.1,1377.8L2246.9,1376.4L2249.6,1383.1L2246.9,1394.0L2220.0,1394.0Z" fill="#fbb565"/><path d="M2246.9,1385.8L2253.6,1391.2L2252.3,1394.0L2245.5,1394.0Z" fill="#86c963"/><path d="M2238.8,1318.6L2246.9,1315.9L2254.9,1321.3L2263.0,1320.0L2271.1,1315.9L2279.1,1318.6L2280.5,1329.4L2279.1,1354.9L2271.1,1354.9L2263.0,1350.9L2254.9,1346.9L2246.9,1345.5L2240.2,1341.5L2237.5,1332.1Z" fill="#e8eaf1"/><path d="M2280.5,1324.0L2291.2,1322.7L2303.3,1324.0L2308.7,1325.4L2311.4,1332.1L2307.4,1337.4L2312.7,1349.5L2300.6,1350.9L2281.8,1350.9L2280.5,1332.1Z" fill="#fbd57e"/><path d="M2279.1,1352.2L2312.7,1350.9L2318.1,1359.0L2319.4,1367.0L2314.1,1372.4L2311.4,1380.5L2303.3,1385.8L2289.9,1385.8L2279.1,1380.5L2276.4,1369.7Z" fill="#e8eaf1"/><path d="M2254.9,1349.5L2264.3,1352.2L2277.8,1359.0L2276.4,1369.7L2273.8,1377.8L2267.0,1384.5L2260.3,1389.9L2253.6,1391.2L2252.3,1380.5L2250.9,1367.0L2253.6,1357.6Z" fill="#b9e07a"/><path d="M2308.7,1379.1L2319.4,1373.7L2327.5,1379.1L2334.2,1385.8L2341.0,1394.0L2308.7,1394.0Z" fill="#f8e48e"/><path d="M2260.3,1389.9L2267.0,1384.5L2279.1,1380.5L2289.9,1385.8L2303.3,1385.8L2308.7,1394.0L2260.3,1394.0Z" fill="#e8eaf1"/><path d="M2309.8,1325.4L2312.7,1332.1L2309.4,1337.4L2314.1,1349.5L2318.8,1359.0L2320.1,1367.0L2322.1,1372.4L2328.9,1380.5L2335.6,1387.2L2341.0,1394.0L2348.3,1394.0L2341.0,1384.5L2338.3,1380.5L2333.6,1373.7L2330.5,1361.9L2326.4,1355.2L2322.4,1348.5L2318.4,1341.7L2314.3,1335.0L2311.7,1331.0L2312.5,1325.4Z" fill="#c0c8d0"/><path d="M2345.7,1324.0L2349.0,1324.3L2354.4,1328.3L2359.8,1332.3L2365.1,1335.0L2371.9,1337.7L2374.5,1341.5L2370.5,1344.2L2365.8,1349.3L2360.0,1345.2L2354.7,1339.9L2350.6,1334.5L2345.3,1329.4Z" fill="#c0c8d0"/></g><polyline points="1807.8,1134.2 1807.8,1165.8 1807.8,1197.4" fill="none" stroke="#ec6a40" stroke-width="2.4" stroke-dasharray="3 7"/><polyline points="1862.7,1255.7 1941.0,1255.7 1949.0,1259.5 1958.4,1258.2 1966.5,1265.6 1973.2,1270.9 1974.5,1277.0 1973.2,1285.0 1985.3,1282.3 1989.3,1275.6 2000.1,1270.3 2008.1,1264.9 2014.9,1260.8" fill="none" stroke="#ec6a40" stroke-width="2.4" stroke-dasharray="3 7"/><polyline points="2465.7,1264.9 2468.4,1270.3 2473.8,1271.6 2480.5,1275.6 2484.5,1281.0 2489.9,1281.7 2496.6,1281.0 2503.3,1284.4 2511.4,1285.7 2519.4,1283.7 2526.2,1279.7 2530.2,1274.3 2535.6,1272.9 2541.0,1268.9 2549.0,1266.9" fill="none" stroke="#b5df73" stroke-width="2.4" stroke-dasharray="3 7"/><polyline points="1879.1,1318.4 1885.9,1320.0 1892.6,1321.3 1899.3,1320.0 1906.0,1319.3 1908.7,1321.3 1912.7,1325.4 1916.8,1327.4 1922.1,1328.0 1926.2,1332.1 1928.9,1337.4" fill="none" stroke="#f2814d" stroke-width="2.4" stroke-dasharray="3 7"/><polyline points="1882.8,1149.7 1893.6,1147.0 1904.3,1143.0 1911.1,1138.7 1917.8,1141.9 1925.9,1148.6 1932.6,1150.0 1936.6,1155.1" fill="none" stroke="#f4f6f8" stroke-opacity="0.9" stroke-width="2.5" stroke-linecap="round" stroke-linejoin="round"/></g><g><rect x="1606" y="1132" width="56" height="112" rx="8" fill="#fbfcfc" stroke="rgba(0,0,0,.08)" stroke-width="2"/><path d="M1606,1187H1662V1236a8,8 0 0 1 -8,8H1614a8,8 0 0 1 -8,-8Z" fill="#eceeee"/><line x1="1606" x2="1662" y1="1187" y2="1187" stroke="#d5d9d9" stroke-width="2"/><path d="M1625,1163.500H1643M1634,1154.500V1172.500" stroke="#3b4a52" stroke-width="4" fill="none"/><path d="M1625,1219.500H1643" stroke="#5c6c75" stroke-width="3.5" fill="none"/></g><g clip-path="url(#lc)"><text x="2871.0" y="1129.7" font-size="23.2" font-weight="700" textLength="175.5" lengthAdjust="spacingAndGlyphs" fill="#000">Metacritic Score</text></g><rect x="2870" y="1146" width="32" height="400" fill="url(#lg)"/><text x="2907.0" y="1192.3" font-size="22" textLength="25.0" lengthAdjust="spacingAndGlyphs" fill="#000">90</text><text x="2907.0" y="1272.9" font-size="22" textLength="25.0" lengthAdjust="spacingAndGlyphs" fill="#000">80</text><text x="2907.0" y="1353.3" font-size="22" textLength="25.0" lengthAdjust="spacingAndGlyphs" fill="#000">70</text></svg></section>
</main>
<div class="shade-bottom"></div>
<div id="chat" style="position:absolute;left:2940px;top:1262px;width:120px;height:120px;border-radius:60px;background:#333;box-shadow:0 2px 16px rgba(0,0,0,.18), 0 0 4px rgba(0,0,0,.10)">
<svg viewBox="0 0 120 120" width="120" height="120"><path d="M38 28H82a7 7 0 0 1 7 7V92L71 85.500H38a7 7 0 0 1 -7 -7V35a7 7 0 0 1 7 -7Z" fill="#fff"/><path d="M41 69Q60 81 79 69" fill="none" stroke="#333" stroke-width="4" stroke-linecap="round"/></svg>
</div>
</body>
</html>
